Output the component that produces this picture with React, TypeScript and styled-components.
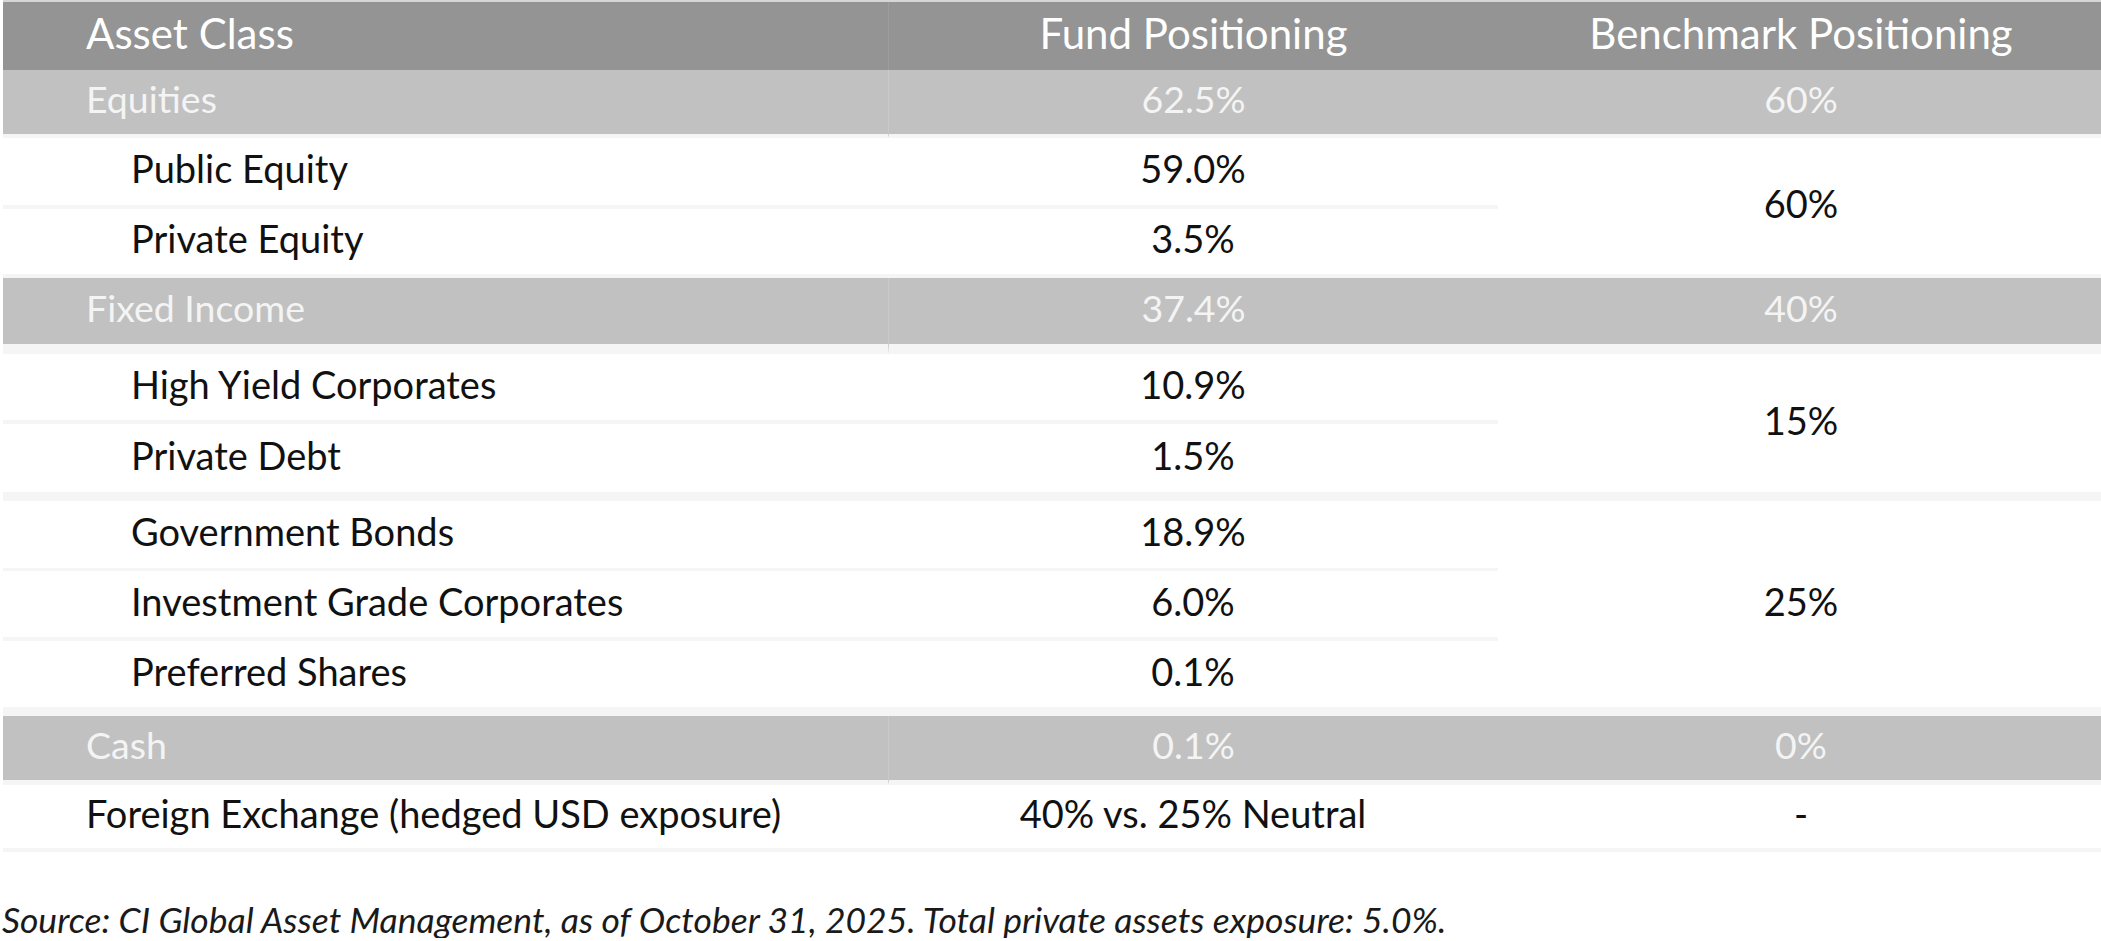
import React from "react";
import styled, { createGlobalStyle } from "styled-components";

const GlobalStyle = createGlobalStyle`
  html, body {
    margin: 0;
    padding: 0;
    background: #ffffff;
  }
  body {
    font-family: Lato, "Open Sans", "Liberation Sans", sans-serif;
    color: #111111;
  }
`;

type Tone = "head" | "group" | "item";

type Row = {
  label: string;
  fund: string;
  bench?: string;
  span?: number;
  tone: Tone;
  indent?: boolean;
  height: number;
  gap: number;
  benchGap?: number;
};

const rows: Row[] = [
  { label: "Equities", fund: "62.5%", bench: "60%", tone: "group", height: 64, gap: 4 },
  { label: "Public Equity", fund: "59.0%", bench: "60%", span: 2, tone: "item", indent: true, height: 67, gap: 4, benchGap: 4 },
  { label: "Private Equity", fund: "3.5%", tone: "item", indent: true, height: 65, gap: 4 },
  { label: "Fixed Income", fund: "37.4%", bench: "40%", tone: "group", height: 66, gap: 10 },
  { label: "High Yield Corporates", fund: "10.9%", bench: "15%", span: 2, tone: "item", indent: true, height: 66, gap: 4, benchGap: 9 },
  { label: "Private Debt", fund: "1.5%", tone: "item", indent: true, height: 68, gap: 9 },
  { label: "Government Bonds", fund: "18.9%", bench: "25%", span: 3, tone: "item", indent: true, height: 67, gap: 3, benchGap: 9 },
  { label: "Investment Grade Corporates", fund: "6.0%", tone: "item", indent: true, height: 66, gap: 4 },
  { label: "Preferred Shares", fund: "0.1%", tone: "item", indent: true, height: 66, gap: 9 },
  { label: "Cash", fund: "0.1%", bench: "0%", tone: "group", height: 64, gap: 5 },
  { label: "Foreign Exchange (hedged USD exposure)", fund: "40% vs. 25% Neutral", bench: "-", tone: "item", height: 63, gap: 4 },
];

const sizes: Record<Tone, number> = { head: 42, group: 37.5, item: 38 };

const Page = styled.div`
  width: 2101px;
`;

const Table = styled.div`
  display: grid;
  grid-template-columns: 885px 610px 606px;
  margin-left: 3px;
  border-top: 2px solid #d6d6d6;
`;

const Cell = styled.div<{
  $tone: Tone;
  $h: number;
  $gap: number;
  $align: "left" | "center";
  $indent?: boolean;
  $divider?: boolean;
}>`
  display: flex;
  align-items: center;
  justify-content: ${({ $align }) => ($align === "center" ? "center" : "flex-start")};
  box-sizing: border-box;
  min-height: ${({ $h, $gap }) => $h + $gap}px;
  padding-left: ${({ $align, $indent }) =>
    $align === "center" ? 0 : $indent ? 128 : 83}px;
  padding-bottom: 7px;
  background: ${({ $tone }) =>
    $tone === "head" ? "#939493" : $tone === "group" ? "#c0c1c0" : "#ffffff"};
  color: ${({ $tone }) =>
    $tone === "head" ? "#ffffff" : $tone === "group" ? "#f4f4f4" : "#111111"};
  border-bottom: ${({ $gap }) => $gap}px solid #f4f5f4;
  border-left: ${({ $divider, $tone }) =>
    $divider
      ? `1px solid ${$tone === "head" ? "#9c9d9c" : "#c8c9c8"}`
      : "none"};
  font-size: ${({ $tone }) => sizes[$tone]}px;
  font-weight: 400;
  line-height: 1;
  white-space: nowrap;
`;

const BenchCell = styled(Cell)<{ $span: number }>`
  grid-row: span ${({ $span }) => $span};
`;

const Source = styled.p`
  margin: 50px 0 0 2px;
  font-style: italic;
  font-weight: 400;
  font-size: 35.5px;
  line-height: 1;
  color: #1a1a1a;
  white-space: nowrap;
`;

export default function App() {
  return (
    <Page>
      <GlobalStyle />
      <Table>
        <Cell $tone="head" $h={68} $gap={0} $align="left">
          Asset Class
        </Cell>
        <Cell $tone="head" $h={68} $gap={0} $align="center" $divider>
          Fund Positioning
        </Cell>
        <Cell $tone="head" $h={68} $gap={0} $align="center">
          Benchmark Positioning
        </Cell>
        {rows.map((r) => (
          <React.Fragment key={r.label}>
            <Cell $tone={r.tone} $h={r.height} $gap={r.gap} $align="left" $indent={r.indent}>
              {r.label}
            </Cell>
            <Cell
              $tone={r.tone}
              $h={r.height}
              $gap={r.gap}
              $align="center"
              $divider={r.tone === "group"}
            >
              {r.fund}
            </Cell>
            {r.bench !== undefined && (
              <BenchCell
                $span={r.span ?? 1}
                $tone={r.tone}
                $h={r.height}
                $gap={r.benchGap ?? r.gap}
                $align="center"
              >
                {r.bench}
              </BenchCell>
            )}
          </React.Fragment>
        ))}
      </Table>
      <Source>
        Source: CI Global Asset Management, as of October 31, 2025. Total private assets
        exposure: 5.0%.
      </Source>
    </Page>
  );
}
